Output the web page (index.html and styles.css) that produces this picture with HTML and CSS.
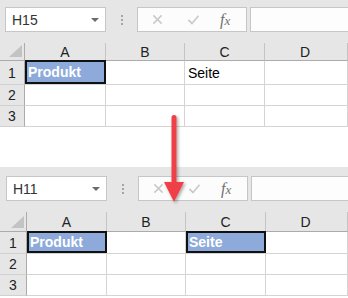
FILE: index.html
```html
<!DOCTYPE html>
<html lang="de">
<head>
    <meta charset="UTF-8">
    <link rel="stylesheet" href="styles.css">
</head>
<body>

<div class="page">

    <!-- Vorher -->
    <div class="sheet sheet-before">
        <div class="toolbar">
            <div class="name-box">
                <span class="name-text">H15</span>
                <svg class="caret" viewBox="0 0 8 4"><polygon points="0,0 8,0 4,4" fill="#6b6b6b"/></svg>
            </div>
            <div class="grip"><i></i><i></i><i></i></div>
            <div class="fx-buttons">
                <svg class="fx-icon" viewBox="0 0 12 12"><path d="M1.5 1.5l9 9M10.5 1.5l-9 9" stroke="#c9c9c9" stroke-width="1.6" fill="none"/></svg>
                <svg class="fx-icon" viewBox="0 0 14 12"><path d="M1.5 6.5l3.8 3.8L12.5 2" stroke="#c9c9c9" stroke-width="1.8" fill="none"/></svg>
                <span class="fx-label">f<small>x</small></span>
            </div>
            <div class="formula-input"></div>
        </div>
        <div class="grid">
            <div class="corner"></div>
            <div class="col-head">A</div>
            <div class="col-head">B</div>
            <div class="col-head">C</div>
            <div class="col-head last">D</div>

            <div class="row-head">1</div>
            <div class="cell"><span class="filled">Produkt</span></div>
            <div class="cell"></div>
            <div class="cell plain">Seite</div>
            <div class="cell"></div>

            <div class="row-head">2</div>
            <div class="cell"></div><div class="cell"></div><div class="cell"></div><div class="cell"></div>

            <div class="row-head">3</div>
            <div class="cell"></div><div class="cell"></div><div class="cell"></div><div class="cell"></div>
        </div>
    </div>

    <!-- Nachher -->
    <div class="sheet sheet-after">
        <div class="toolbar">
            <div class="name-box">
                <span class="name-text">H11</span>
                <svg class="caret" viewBox="0 0 8 4"><polygon points="0,0 8,0 4,4" fill="#6b6b6b"/></svg>
            </div>
            <div class="grip"><i></i><i></i><i></i></div>
            <div class="fx-buttons">
                <svg class="fx-icon" viewBox="0 0 12 12"><path d="M1.5 1.5l9 9M10.5 1.5l-9 9" stroke="#c9c9c9" stroke-width="1.6" fill="none"/></svg>
                <svg class="fx-icon" viewBox="0 0 14 12"><path d="M1.5 6.5l3.8 3.8L12.5 2" stroke="#c9c9c9" stroke-width="1.8" fill="none"/></svg>
                <span class="fx-label">f<small>x</small></span>
            </div>
            <div class="formula-input"></div>
        </div>
        <div class="grid">
            <div class="corner"></div>
            <div class="col-head">A</div>
            <div class="col-head">B</div>
            <div class="col-head">C</div>
            <div class="col-head last">D</div>

            <div class="row-head">1</div>
            <div class="cell"><span class="filled">Produkt</span></div>
            <div class="cell"></div>
            <div class="cell"><span class="filled">Seite</span></div>
            <div class="cell"></div>

            <div class="row-head">2</div>
            <div class="cell"></div><div class="cell"></div><div class="cell"></div><div class="cell"></div>

            <div class="row-head">3</div>
            <div class="cell"></div><div class="cell"></div><div class="cell"></div><div class="cell"></div>
        </div>
    </div>

    <!-- Pfeil -->
    <svg class="arrow" viewBox="0 0 40 100" width="40" height="100">
        <defs>
            <filter id="shadow" x="-50%" y="-20%" width="200%" height="140%">
                <feDropShadow dx="1.5" dy="1.5" stdDeviation="1.5" flood-color="#000" flood-opacity="0.35"/>
            </filter>
        </defs>
        <g filter="url(#shadow)" fill="#ef3f46">
            <rect x="11.5" y="3" width="5" height="72" rx="2.5"/>
            <polygon points="4,70 24,70 14,90"/>
        </g>
    </svg>
</div>

</body>
</html>
```

FILE: styles.css
```css
/* General */
body {
    margin: 0;
    background: #ffffff;
    font-family: "Liberation Sans", Arial, sans-serif;
}

.page {
    position: relative;
    width: 348px;
    height: 298px;
    overflow: hidden;
    display: flex;
    flex-direction: column;
    gap: 40px;
}

/* Formula bar */
.toolbar {
    display: flex;
    align-items: flex-start;
    background: #e6e6e6;
    height: 43px;
    padding: 7px 0 0 5px;
    box-sizing: border-box;
}

.sheet-after .toolbar {
    height: 45px;
    padding: 9px 0 0 6px;
}

.name-box {
    width: 101px;
    height: 25px;
    box-sizing: border-box;
    background: #ffffff;
    border: 1px solid #c6c6c6;
    display: flex;
    align-items: center;
    justify-content: space-between;
    padding: 0 6px 0 6px;
}

.name-text {
    font-size: 14px;
    color: #333333;
}

.caret {
    width: 8px;
    height: 4px;
}

.grip {
    width: 31px;
    display: flex;
    flex-direction: column;
    align-items: center;
    gap: 2px;
    padding-top: 8px;
}

.grip i {
    width: 2px;
    height: 2px;
    background: #a5a5a5;
}

.fx-buttons {
    width: 110px;
    height: 25px;
    box-sizing: border-box;
    background: #fcfcfc;
    border: 1px solid #c6c6c6;
    display: flex;
    align-items: center;
    padding: 0 8px 0 14px;
}

.fx-icon {
    width: 11px;
    height: 11px;
    margin-right: 24px;
}

.fx-icon + .fx-icon {
    width: 13px;
    margin-right: 20px;
}

.fx-label {
    font-family: "Liberation Serif", "Times New Roman", serif;
    font-style: italic;
    font-size: 16px;
    color: #707070;
}

.fx-label small {
    font-size: 13px;
}

.formula-input {
    flex: 1;
    height: 25px;
    box-sizing: border-box;
    margin-left: 3px;
    margin-right: -4px;
    background: #fdfdfd;
    border: 1px solid #c6c6c6;
}

/* Grid */
.grid {
    display: grid;
    grid-template-columns: 25px 81px 79px 80px 83px;
    grid-template-rows: 18px 24px 21px 21px;
}

.sheet-after .grid {
    grid-template-columns: 27px 80px 79px 80px 82px;
    grid-template-rows: 20px 22px 21px 21px;
}

.corner {
    background: #e6e6e6;
    border-right: 1px solid #ababab;
    border-bottom: 1px solid #ababab;
    position: relative;
}

.corner::after {
    content: "";
    position: absolute;
    right: 2px;
    bottom: 3px;
    width: 0;
    height: 0;
    border-left: 13px solid transparent;
    border-bottom: 12px solid #c3c3c3;
}

.col-head {
    background: #e6e6e6;
    border-right: 1px solid #c4c4c4;
    border-bottom: 1px solid #ababab;
    font-size: 14px;
    color: #222222;
    display: flex;
    align-items: center;
    justify-content: center;
}

.col-head.last {
    padding-right: 2px;
}

.row-head {
    background: #e6e6e6;
    border-right: 1px solid #ababab;
    border-bottom: 1px solid #d0d0d0;
    font-size: 14px;
    color: #222222;
    display: flex;
    align-items: center;
    justify-content: center;
}

.cell {
    border-right: 1px solid #d4d4d4;
    border-bottom: 1px solid #d4d4d4;
    position: relative;
    font-size: 14px;
    color: #000000;
}

.cell.plain {
    display: flex;
    align-items: center;
    padding-left: 3px;
}

.filled {
    position: absolute;
    left: 0;
    top: -1px;
    right: -1px;
    bottom: 0;
    background: #8eaadb;
    border: 2px solid #111111;
    color: #ffffff;
    font-weight: bold;
    display: flex;
    align-items: center;
    padding-left: 1px;
}

/* Arrow overlay */
.arrow {
    position: absolute;
    left: 160px;
    top: 112px;
}
```
